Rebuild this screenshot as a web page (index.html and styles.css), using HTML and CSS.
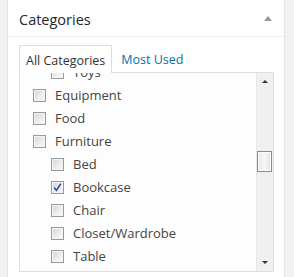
FILE: index.html
```html
<!DOCTYPE html>
<html>
<head>
<meta charset="utf-8">
<link rel="stylesheet" href="styles.css">
</head>
<body>
<div class="postbox">
  <h2 class="hndle"><span class="title">Categories</span><span class="toggle"></span></h2>
  <div class="inside">
    <ul class="tabs">
      <li class="tab active">All Categories</li>
      <li class="tab"><a class="tab-link">Most Used</a></li>
    </ul>
    <div class="tabs-panel">
      <div class="list">
        <ul class="checklist">
          <li class="row child"><span class="cb"></span><span class="label">Toys</span></li>
          <li class="row"><span class="cb"></span><span class="label">Equipment</span></li>
          <li class="row"><span class="cb"></span><span class="label">Food</span></li>
          <li class="row"><span class="cb"></span><span class="label">Furniture</span></li>
          <li class="row child"><span class="cb"></span><span class="label">Bed</span></li>
          <li class="row child"><span class="cb checked"><svg width="11" height="11" viewBox="0 0 11 11"><path d="M2.2 5.6 L4.4 8.4 L8.8 1.8" fill="none" stroke="#2b4f9e" stroke-width="1.6"/></svg></span><span class="label">Bookcase</span></li>
          <li class="row child"><span class="cb"></span><span class="label">Chair</span></li>
          <li class="row child"><span class="cb"></span><span class="label">Closet/Wardrobe</span></li>
          <li class="row child"><span class="cb"></span><span class="label">Table</span></li>
        </ul>
      </div>
      <div class="scrollbar">
        <div class="sb-btn"><span class="arr-up"></span></div>
        <div class="sb-track"><div class="sb-thumb"></div></div>
        <div class="sb-btn"><span class="arr-down"></span></div>
      </div>
    </div>
  </div>
</div>
</body>
</html>
```
FILE: styles.css
```css
html, body {
  margin: 0;
  padding: 0;
  background: #f1f1f1;
  font-family: "Open Sans", "Liberation Sans", sans-serif;
  color: #444;
}
.postbox {
  margin-left: 7px;
  width: 276px;
  background: #fff;
  border: 1px solid #e5e5e5;
  border-top: none;
  border-bottom: none;
  height: 277px;
  overflow: hidden;
}
.hndle {
  margin: 0;
  height: 37px;
  box-sizing: border-box;
  border-bottom: 1px solid #eee;
  display: flex;
  align-items: center;
  justify-content: space-between;
  padding: 2px 12px 0 11px;
  font-size: 14.5px;
  font-weight: 400;
  color: #23282d;
}
.toggle {
  width: 0;
  height: 0;
  border-left: 4px solid transparent;
  border-right: 4px solid transparent;
  border-bottom: 5px solid #999;
  margin-top: -1px;
}
.inside {
  padding: 8px 10px 12px 11px;
}
.tabs {
  list-style: none;
  margin: 0;
  padding: 0;
  display: flex;
  height: 27px;
  font-size: 12.5px;
}
.tab {
  padding: 2px 6px 0 6px;
  display: flex;
  align-items: center;
  height: 27px;
  box-sizing: border-box;
}
.tab.active {
  border: 1px solid #ddd;
  border-bottom: none;
  background: #fff;
  height: 28px;
  margin-bottom: -1px;
  position: relative;
  z-index: 1;
  color: #333;
}
.tab-link {
  color: #0073aa;
  padding-left: 3px;
}
.tabs-panel {
  display: flex;
  height: 200px;
  box-sizing: border-box;
  border: 1px solid #ddd;
  background: #fdfdfd;
}
.list {
  flex: 1;
  overflow: hidden;
}
.checklist {
  list-style: none;
  margin: -12px 0 0 0;
  padding: 0;
  font-size: 13px;
}
.row {
  height: 23px;
  display: flex;
  align-items: center;
  padding-left: 13px;
}
.row.child {
  padding-left: 31px;
}
.cb {
  width: 11px;
  height: 11px;
  border: 1px solid #9a9a9a;
  background: linear-gradient(135deg, #d4d4d4 0%, #eeeeee 60%, #fafafa 100%);
  box-shadow: inset 0 0 0 1px #f4f4f4;
  display: flex;
  align-items: center;
  justify-content: center;
  flex: none;
}
.cb svg { display: block; }
.label {
  margin-left: 9px;
  line-height: 23px;
}
.scrollbar {
  width: 16px;
  display: flex;
  flex-direction: column;
  background: #f0f0f0;
  border-left: 1px solid #e8e8e8;
}
.sb-btn {
  height: 17px;
  display: flex;
  align-items: center;
  justify-content: center;
}
.arr-up {
  width: 0; height: 0;
  border-left: 3px solid transparent;
  border-right: 3px solid transparent;
  border-bottom: 3px solid #333;
}
.arr-down {
  width: 0; height: 0;
  border-left: 3px solid transparent;
  border-right: 3px solid transparent;
  border-top: 3px solid #333;
}
.sb-track {
  flex: 1;
  padding-top: 61px;
}
.sb-thumb {
  width: 13px;
  height: 19px;
  border: 1px solid #8c8c8c;
  background: linear-gradient(90deg, #e8e8e8, #f6f6f6 50%, #e4e4e4);
  box-shadow: inset 0 0 0 1px #fbfbfb;
}
```
